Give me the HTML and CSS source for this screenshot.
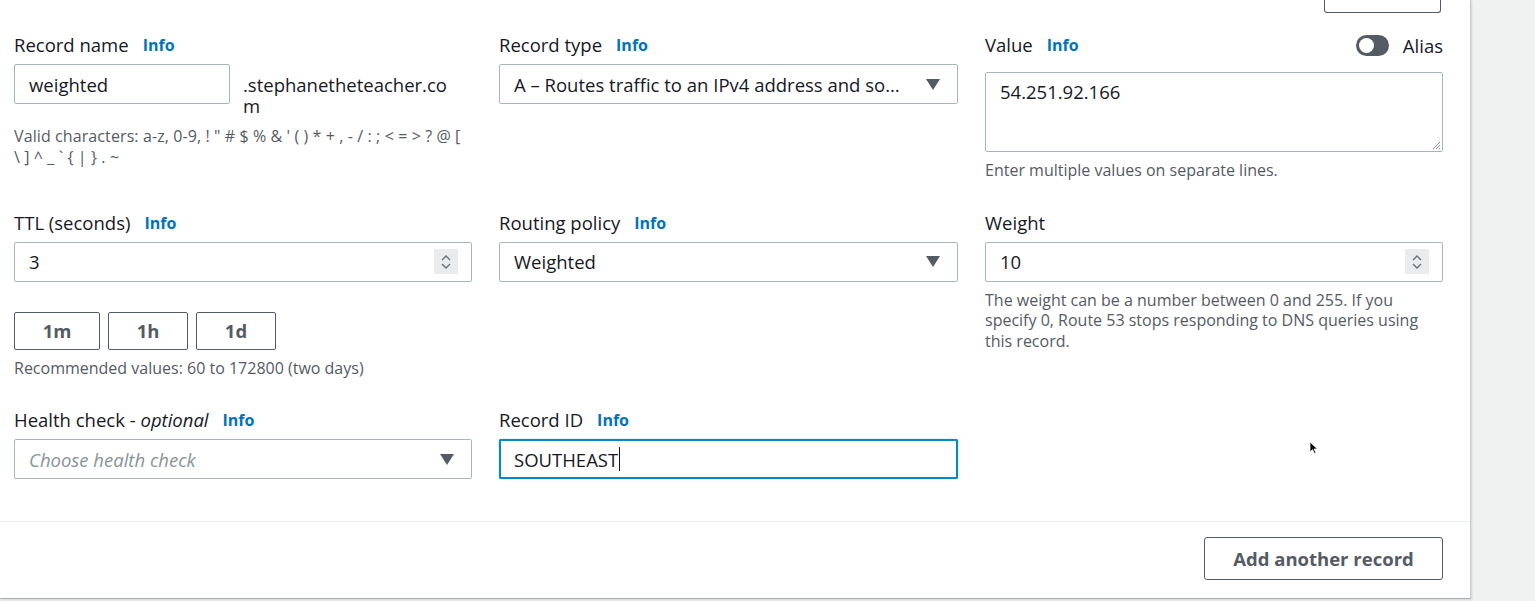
FILE: index.html
```html
<!DOCTYPE html>
<html lang="en">
<head>
<meta charset="utf-8">
<title>Record</title>
<link rel="stylesheet" href="styles.css">
</head>
<body>
<div class="page">
  <div class="panel">
    <div class="body">
      <div class="topbar"><div class="top-btn"></div></div>
      <div class="grid">
        <div class="field">
          <div class="label-row"><span class="label">Record name</span><span class="info">Info</span></div>
          <div class="name-row">
            <div class="input name-input">weighted</div>
            <div class="suffix">.stephanetheteacher.com</div>
          </div>
          <div class="hint hint-chars">Valid characters: a-z, 0-9, ! " # $ % &amp; ' ( ) * + , - / : ; &lt; = &gt; ? @ [ \ ] ^ _ ` { | } . ~</div>
        </div>
        <div class="field">
          <div class="label-row"><span class="label">Record type</span><span class="info">Info</span></div>
          <div class="input select"><span class="sel-text">A – Routes traffic to an IPv4 address and so…</span><span class="caret"></span></div>
        </div>
        <div class="field">
          <div class="label-row value-row"><span class="label">Value</span><span class="info">Info</span>
            <span class="toggle-wrap"><span class="toggle"><span class="knob"></span></span><span class="alias">Alias</span></span>
          </div>
          <div class="textarea">54.251.92.166
            <svg class="grip" width="10" height="10" viewBox="0 0 10 10"><path d="M9 2 L2 9 M9 5 L5 9 M9 8 L8 9" stroke="#8a8f94" stroke-width="1"/></svg>
          </div>
          <div class="hint">Enter multiple values on separate lines.</div>
        </div>

        <div class="field">
          <div class="label-row"><span class="label">TTL (seconds)</span><span class="info">Info</span></div>
          <div class="input number"><span>3</span>
            <span class="stepper"><svg width="14" height="18" viewBox="0 0 14 18"><path d="M3 7 L7 3 L11 7 M3 11 L7 15 L11 11" fill="none" stroke="#687078" stroke-width="1.4"/></svg></span>
          </div>
          <div class="quick">
            <button class="qbtn q1m">1m</button>
            <button class="qbtn q1h">1h</button>
            <button class="qbtn q1d">1d</button>
          </div>
          <div class="hint">Recommended values: 60 to 172800 (two days)</div>
        </div>
        <div class="field">
          <div class="label-row"><span class="label">Routing policy</span><span class="info">Info</span></div>
          <div class="input select"><span class="sel-text">Weighted</span><span class="caret"></span></div>
        </div>
        <div class="field">
          <div class="label-row"><span class="label">Weight</span></div>
          <div class="input number"><span>10</span>
            <span class="stepper"><svg width="14" height="18" viewBox="0 0 14 18"><path d="M3 7 L7 3 L11 7 M3 11 L7 15 L11 11" fill="none" stroke="#687078" stroke-width="1.4"/></svg></span>
          </div>
          <div class="hint">The weight can be a number between 0 and 255. If you specify 0, Route 53 stops responding to DNS queries using this record.</div>
        </div>

        <div class="field">
          <div class="label-row"><span class="label">Health check - <i>optional</i></span><span class="info">Info</span></div>
          <div class="input select"><span class="sel-text placeholder">Choose health check</span><span class="caret"></span></div>
        </div>
        <div class="field">
          <div class="label-row"><span class="label">Record ID</span><span class="info">Info</span></div>
          <div class="input focused">SOUTHEAST<span class="text-caret"></span></div>
        </div>
        <div class="field cursor-cell">
          <svg class="pointer" width="10" height="14" viewBox="0 0 10 14"><path d="M1 1 L1 11 L3.5 8.6 L5.5 12.8 L7 12.1 L5.1 8 L8.5 8 Z" fill="#000" stroke="#fff" stroke-width="0.8"/></svg>
        </div>
      </div>
    </div>
    <div class="footer">
      <button class="add-btn">Add another record</button>
    </div>
  </div>
  <div class="side"></div>
</div>
</body>
</html>
```
FILE: styles.css
```css
* { box-sizing: border-box; }
html, body { margin: 0; padding: 0; }
body {
  background: #f0f1f1;
  font-family: "Open Sans", "Noto Sans", sans-serif;
  color: #16191f;
  overflow: hidden;
}
.page {
  display: flex;
  height: 601px;
  align-items: flex-start;
}
.panel {
  width: 1471px;
  height: 599px;
  background: #fff;
  border-right: 1px solid #c6cbcd;
  border-bottom: 1px solid #a9b0b4;
  box-shadow: 1px 1px 2px rgba(0,0,0,0.12);
  display: flex;
  flex-direction: column;
}
.body {
  padding: 0 27px 0 14px;
  height: 522px;
  border-bottom: 1px solid #eaeded;
}
.topbar {
  display: flex;
  justify-content: flex-end;
  height: 34px;
}
.top-btn {
  width: 117px;
  height: 13px;
  border: 1px solid #545b64;
  border-top: none;
  border-radius: 0 0 3px 3px;
  margin-right: 2px;
}
.grid {
  display: grid;
  grid-template-columns: 458px 459px 458px;
  column-gap: 27px;
  row-gap: 31px;
}
.field { position: relative; }
.label-row {
  display: flex;
  align-items: center;
  height: 22px;
  margin-bottom: 8px;
}
.label {
  font-size: 18.5px;
  line-height: 22px;
}
.label i { font-style: italic; }
.info {
  font-size: 16px;
  font-weight: 700;
  color: #0073bb;
  margin-left: 14px;
}
.value-row { margin-bottom: 16px; }
.toggle-wrap {
  margin-left: auto;
  display: flex;
  align-items: center;
}
.toggle {
  width: 33px;
  height: 21px;
  border-radius: 11px;
  background: #545b64;
  position: relative;
  display: inline-block;
}
.knob {
  position: absolute;
  left: 3px;
  top: 3px;
  width: 15px;
  height: 15px;
  border-radius: 50%;
  background: #fff;
}
.alias {
  font-size: 18.5px;
  margin-left: 14px;
}
.input {
  height: 40px;
  border: 1px solid #aab7b8;
  border-radius: 2px;
  padding: 0 14px;
  display: flex;
  align-items: center;
  font-size: 18.5px;
  color: #16191f;
  background: #fff;
}
.name-row {
  display: flex;
  align-items: flex-start;
}
.name-input { width: 216px; }
.suffix {
  width: 210px;
  margin-left: 13px;
  padding-top: 10px;
  font-size: 18.5px;
  line-height: 21px;
  word-break: break-all;
}
.hint {
  font-size: 16px;
  line-height: 20.5px;
  color: #545b64;
  margin-top: 8px;
}
.hint-chars { margin-top: 10px; width: 450px; letter-spacing: 0.1px; }
.select { justify-content: space-between; }
.sel-text { white-space: nowrap; overflow: hidden; }
.placeholder { color: #879596; font-style: italic; }
.caret {
  flex: none;
  width: 0;
  height: 0;
  border-left: 7px solid transparent;
  border-right: 7px solid transparent;
  border-top: 11px solid #545b64;
  margin-right: 3px;
  margin-left: 10px;
}
.textarea {
  position: relative;
  height: 80px;
  border: 1px solid #aab7b8;
  border-radius: 2px;
  padding: 7px 14px;
  font-size: 18.5px;
  line-height: 24px;
}
.grip { position: absolute; right: 1px; bottom: 1px; }
.number { justify-content: space-between; }
.stepper {
  width: 24px;
  height: 25px;
  background: #e9ebed;
  display: flex;
  align-items: center;
  justify-content: center;
  margin-right: -1px;
}
.quick {
  display: flex;
  gap: 8px;
  margin-top: 30px;
}
.qbtn {
  height: 38px;
  border: 1px solid #545b64;
  border-radius: 2px;
  background: #fff;
  font-family: inherit;
  font-size: 18.5px;
  font-weight: 700;
  color: #545b64;
  padding: 0;
}
.q1m { width: 86px; }
.q1h { width: 80px; }
.q1d { width: 80px; }
.focused {
  border: 2px solid #0a88c4;
  padding-left: 13px;
  box-shadow: 0 0 1px #0a88c4;
}
.text-caret {
  display: inline-block;
  width: 1px;
  height: 24px;
  background: #16191f;
  margin-left: 1px;
}
.cursor-cell { min-height: 60px; }
.pointer {
  position: absolute;
  left: 324px;
  top: 32px;
}
.footer {
  flex: 1;
  display: flex;
  justify-content: flex-end;
  align-items: flex-start;
  padding: 15px 27px 0 0;
}
.add-btn {
  width: 239px;
  height: 43px;
  border: 1px solid #545b64;
  border-radius: 3px;
  background: #fff;
  font-family: inherit;
  font-size: 18.5px;
  font-weight: 700;
  color: #545b64;
}
.side { flex: 1; }
```
